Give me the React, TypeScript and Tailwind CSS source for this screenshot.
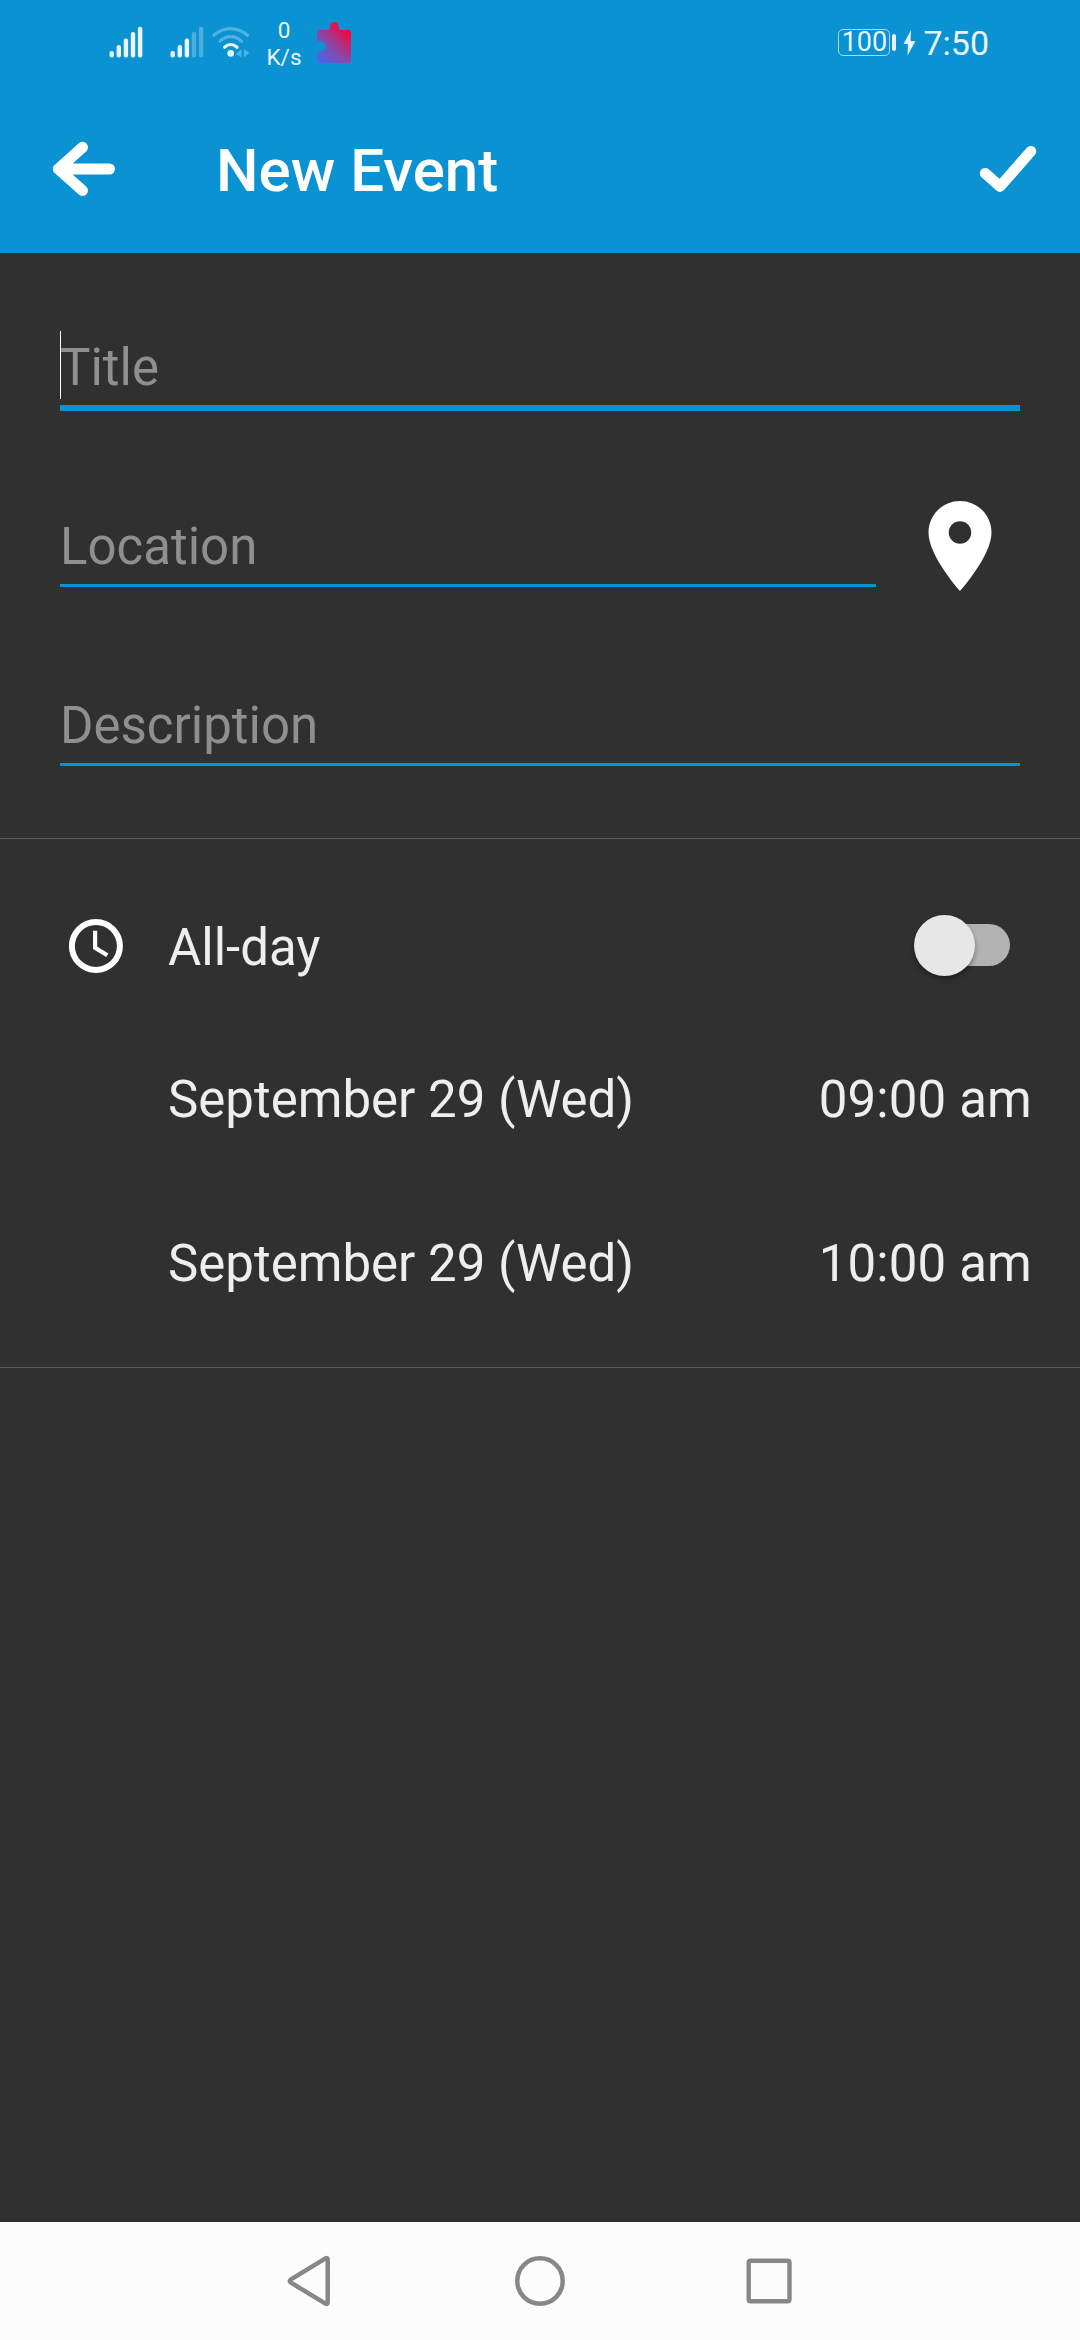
import React from "react";

function SignalBars({ strength }: { strength: number }) {
  const tops = [51, 45, 38.5, 32, 26.7];
  return (
    <svg width="34" height="34" viewBox="0 25 34 34" fill="#e9f5fc">
      {tops.map((y, i) => (
        <rect
          key={y}
          x={0.5 + i * 7.1}
          y={y}
          width="4.4"
          height={57.4 - y}
          rx="2"
          opacity={i < strength ? 1 : 0.3}
        />
      ))}
    </svg>
  );
}

function WifiIcon() {
  return (
    <svg width="38" height="34" viewBox="212 25 38 34" fill="none" strokeWidth="3.2" strokeLinecap="round">
      <path d="M214 35.2Q221.500 28.600 230.700 28.600T247.400 35.200" stroke="#4fb2e0" />
      <path d="M220 41.200Q225 36.700 230.700 36.700T241.600 41.200" stroke="#4fb2e0" />
      <path d="M224.600 47.200Q227.400 44.500 230.700 44.500T237 47.200" stroke="#e9f5fc" />
      <circle cx="230.700" cy="53.400" r="3.300" fill="#e9f5fc" />
      <path d="M236 54l5.500-5v8.500zM249.500 52.500l-5.500-3.500v8.500z" fill="#4fb2e0" />
    </svg>
  );
}

function PuzzleIcon() {
  return (
    <svg width="34" height="42" viewBox="317 22 34 42">
      <defs>
        <linearGradient id="puzzle" x1="319" y1="62" x2="349" y2="32" gradientUnits="userSpaceOnUse">
          <stop offset="0" stopColor="#4368f0" />
          <stop offset="0.5" stopColor="#8d46a5" />
          <stop offset="1" stopColor="#f5053f" />
        </linearGradient>
      </defs>
      <path
        d="M320 30H329.300L330 26Q330.700 22 334.300 22T338.600 26L339.300 30H348Q351 30 351 33V60Q351 63 348 63H320Q317 63 317 60V52H320Q325.700 51 325.700 46.300T320 41H317V33Q317 30 320 30Z"
        fill="url(#puzzle)"
      />
    </svg>
  );
}

function StatusBar() {
  return (
    <div className="flex h-[90px] items-start justify-between pr-[91px] pl-[109px] text-[#e9f5fc]">
      <div className="flex items-start">
        <div className="mt-[25px] flex">
          <SignalBars strength={5} />
          <div className="ml-[27px]">
            <SignalBars strength={3} />
          </div>
          <div className="ml-[8px]">
            <WifiIcon />
          </div>
        </div>
        <div className="mt-[17px] ml-[16px] flex w-[36px] flex-col items-center text-[22.500px] leading-[27px]">
          <span>0</span>
          <span>K/s</span>
        </div>
        <div className="mt-[22px] ml-[15px]">
          <PuzzleIcon />
        </div>
      </div>
      <div className="flex items-start">
        <div className="mt-[29px] flex h-[27px] w-[52px] items-center justify-center rounded-[5px] border-[1.500px] border-[#a9daf1] text-[27px] leading-[27px]">
          100
        </div>
        <div className="mt-[34px] ml-[2px] h-[17px] w-[4px] rounded-full bg-[#e9f5fc]" />
        <svg className="mt-[30px] ml-[7px]" width="13" height="26" viewBox="0 0 13 26" fill="#e9f5fc">
          <path d="M8 0L0.500 14H5L4.500 25.500L12.500 11H7.500Z" />
        </svg>
        <span className="mt-[23px] ml-[7px] text-[34px] leading-[40px]">7:50</span>
      </div>
    </div>
  );
}

function AppBar() {
  return (
    <div className="flex h-[163px] items-start text-white">
      <svg
        className="mt-[47px] ml-[48px]"
        width="72"
        height="64"
        viewBox="48 137 72 64"
        fill="none"
        stroke="currentColor"
        strokeWidth="11"
        strokeLinecap="round"
        strokeLinejoin="round"
      >
        <path d="M82.500 147.300L58.300 169L82.500 190.500M58.300 169H109.500" />
      </svg>
      <h1 className="mt-[46px] ml-[96px] text-[60px] leading-[70px] font-medium">New Event</h1>
      <svg
        className="mt-[50px] mr-[36px] ml-auto"
        width="68"
        height="60"
        viewBox="976 140 68 60"
        fill="none"
        stroke="currentColor"
        strokeWidth="10.800"
        strokeLinecap="round"
        strokeLinejoin="round"
      >
        <path d="M985.200 173.300L1000 186.500L1030.900 151.300" />
      </svg>
    </div>
  );
}

function Form() {
  return (
    <div className="flex flex-col text-[#8f8f8f]">
      <div className="relative mx-[60px] mt-[78px] h-[80px] border-b-[6px] border-[#0a92d3] pt-[7px] leading-[60px]">
        Title
        <span className="absolute top-0 left-0 h-[68px] w-px bg-white" />
      </div>
      <div className="mt-[81px] mr-[66px] ml-[60px] flex h-[108px] items-start justify-between">
        <div className="h-[95px] w-[816px] border-b-[3px] border-[#0a92d3] pt-[25px] leading-[60px]">Location</div>
        <svg width="108" height="108" viewBox="0 0 24 24" fill="white">
          <path d="M12 2C8.130 2 5 5.130 5 9c0 5.250 7 13 7 13s7-7.750 7-13c0-3.870-3.130-7-7-7zm0 9.500a2.500 2.500 0 0 1 0-5 2.500 2.500 0 0 1 0 5z" />
        </svg>
      </div>
      <div className="mx-[60px] mt-[90px] h-[76px] border-b-[3px] border-[#0a92d3] pt-[6px] leading-[60px]">
        Description
      </div>
    </div>
  );
}

function DateRow({ date, time }: { date: string; time: string }) {
  return (
    <div className="flex h-[60px] items-center justify-between pr-[48px] pl-[168px] leading-[60px]">
      <span>{date}</span>
      <span className="tracking-[0.150px]">{time}</span>
    </div>
  );
}

function Schedule() {
  return (
    <div className="mt-[72px] flex h-[530px] flex-col border-y border-[#5a5a5a] pt-[76px] text-[#eeeeee]">
      <div className="flex h-[62px] items-start pr-[70px] pl-[68px]">
        <svg width="56" height="62" viewBox="68 915 56 62" fill="none" stroke="white">
          <circle cx="95.900" cy="946" r="24" strokeWidth="6" />
          <path d="M95.100 930.700V947.800L107.300 955.300" strokeWidth="4.200" />
        </svg>
        <span className="ml-[44px] mt-[2px] leading-[62px]">All-day</span>
        <div className="mt-[9px] ml-auto flex h-[42px] w-[88px] items-center rounded-full bg-[#b2b2b2]">
          <div className="-ml-[8px] h-[61px] w-[61px] shrink-0 rounded-full bg-[#e7e7e7] shadow-[0_3px_5px_rgba(0,0,0,0.35)]" />
        </div>
      </div>
      <div className="mt-[93px]">
        <DateRow date="September 29 (Wed)" time="09:00 am" />
      </div>
      <div className="mt-[104px]">
        <DateRow date="September 29 (Wed)" time="10:00 am" />
      </div>
    </div>
  );
}

function NavBar() {
  return (
    <div className="mt-auto flex h-[118px] items-start bg-[#fcfcfc] pt-[32px] pl-[285px]">
      <svg width="50" height="54" viewBox="285 2254 50 54" fill="none" stroke="#878787" strokeWidth="4.500" strokeLinejoin="round">
        <path d="M327.700 2259.500Q327.700 2257.500 325.500 2258.300L291 2279.300Q288.600 2281 291 2282.700L325.500 2303.700Q327.700 2304.500 327.700 2302.500Z" />
      </svg>
      <svg className="ml-[178px]" width="54" height="54" viewBox="0 0 54 54" fill="none" stroke="#878787" strokeWidth="4.500">
        <circle cx="27" cy="27" r="22.700" />
      </svg>
      <svg className="ml-[176px]" width="54" height="54" viewBox="743 2254 54 54" fill="none" stroke="#878787" strokeWidth="4.400">
        <rect x="748.700" y="2260.700" width="40.800" height="40.500" rx="1.800" />
      </svg>
    </div>
  );
}

export default function App() {
  return (
    <div className="flex h-[2340px] w-[1080px] flex-col overflow-hidden bg-[#303030] font-[Roboto,sans-serif] text-[51px]">
      <header className="bg-[#0a92d3]">
        <StatusBar />
        <AppBar />
      </header>
      <Form />
      <Schedule />
      <NavBar />
    </div>
  );
}
